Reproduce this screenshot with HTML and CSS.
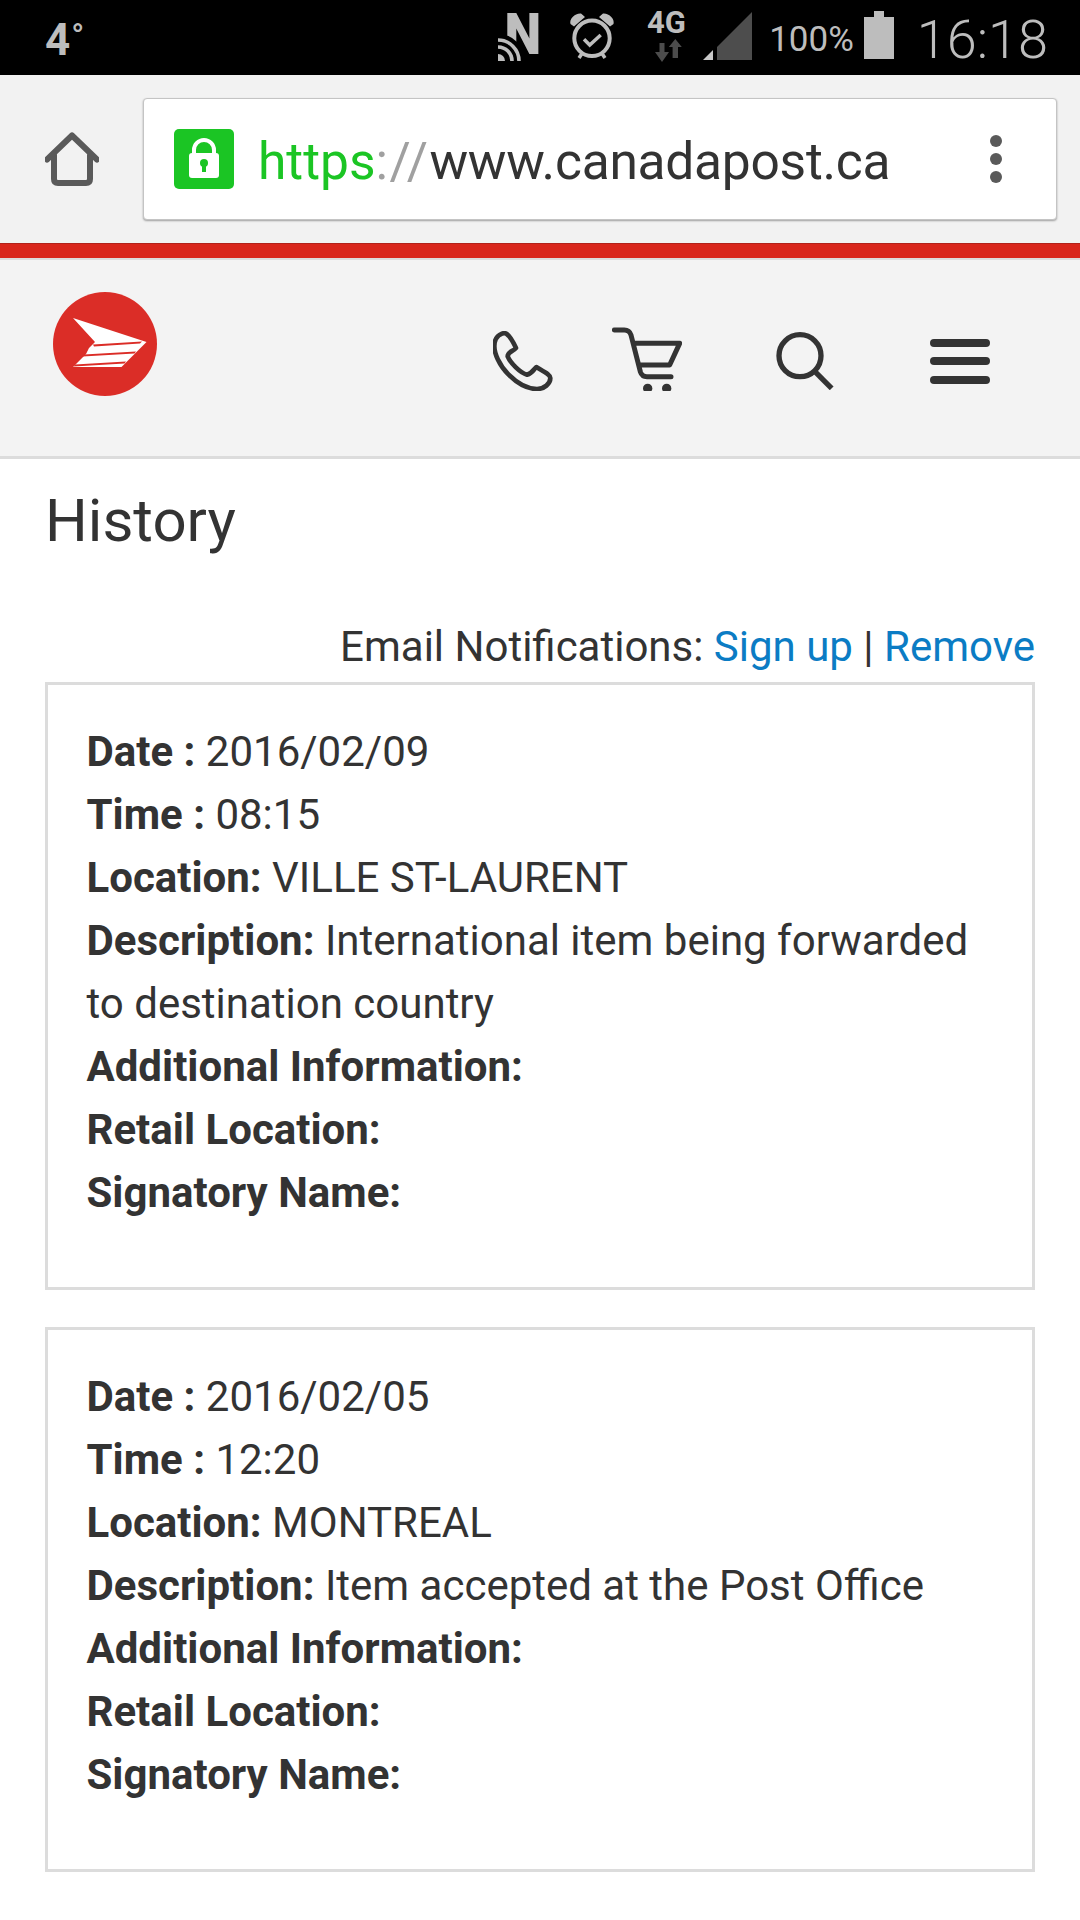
FILE: index.html
```html
<!DOCTYPE html>
<html lang="en">
<head>
<meta charset="utf-8">
<title>History - Canada Post</title>
<link rel="stylesheet" href="styles.css">
</head>
<body>
<div class="status">
  <span class="temp">4<span class="deg">°</span></span>
  <svg class="st-nfc" width="44" height="70" viewBox="0 0 44 70">
    <text class="st-n" transform="translate(6.500 54) scale(.9 1)">N</text>
    <circle cx="0" cy="61" r="27" fill="#000"/>
    <g fill="none" stroke="#bdbdbd" stroke-width="3.600">
      <path d="M0 40A21 21 0 0 1 21 61"/>
      <path d="M0 47A14 14 0 0 1 14 61"/>
    </g>
    <path d="M0 54A7 7 0 0 1 7 61H0z" fill="#bdbdbd"/>
  </svg>
  <svg class="st-alarm" width="46" height="50" viewBox="0 0 46 50">
    <circle cx="23" cy="26.300" r="17.700" fill="none" stroke="#bdbdbd" stroke-width="4"/>
    <path d="M15 27.300l5.700 5.700 11-10" fill="none" stroke="#bdbdbd" stroke-width="3.500"/>
    <path d="M1.500 12C0 7 6 1 12 1.500L16 5 5 14.500z M44.500 12C46 7 40 1 34 1.500L30 5 41 14.500z" fill="#bdbdbd"/>
    <path d="M13 41.500l-3 4.500M33 41.500l3 4.500" stroke="#bdbdbd" stroke-width="3.500"/>
  </svg>
  <svg class="st-net" width="40" height="64" viewBox="0 0 40 64">
    <text class="st-4g" x="0" y="33">4G</text>
    <path d="M12.500 43h5v9H22l-7 10-7-10h4.500z M28.300 39l6.500 8H31v11h-5.400V47h-3.800z" fill="#4c4c4c"/>
  </svg>
  <svg class="st-signal" width="49" height="48" viewBox="0 0 49 48">
    <path d="M14 48V35L49 0v48z" fill="#4d4d4d"/>
    <path d="M0 48l10-10v10z" fill="#c8c8c8"/>
  </svg>
  <span class="st-pct">100%</span>
  <svg class="st-batt" width="30" height="48" viewBox="0 0 30 48">
    <path d="M10 0h10v6h10v42H0V6h10z" fill="#bdbdbd"/>
  </svg>
  <span class="st-time">16:18</span>
</div>

<div class="chrome">
  <svg class="home" width="54" height="56" viewBox="0 0 54 56">
    <path d="M2 28.500L27 4.500l25 24M9 24v24q0 4 4 4h28q4 0 4-4V24" fill="none" stroke="#5a5a5a" stroke-width="6" stroke-linecap="round" stroke-linejoin="round"/>
  </svg>
  <div class="urlbox">
    <svg class="lock" width="60" height="60" viewBox="0 0 60 60">
      <rect width="60" height="60" rx="5" fill="#1bc524"/>
      <path d="M20 26v-5a10 10 0 0 1 20 0v5" fill="none" stroke="#fff" stroke-width="4"/>
      <rect x="15" y="24" width="30" height="25" rx="3" fill="#fff"/>
      <circle cx="30" cy="34" r="4" fill="#1bc524"/>
      <rect x="28" y="35" width="4" height="8" fill="#1bc524"/>
    </svg>
    <span class="url"><span class="u-scheme">https</span><span class="u-sep">://</span><span class="u-host">www.canadapost.ca</span></span>
    <span class="dots"><i></i><i></i><i></i></span>
  </div>
</div>
<div class="redbar"></div>

<header class="site">
  <svg class="logo" width="104" height="104" viewBox="0 0 104 104">
    <circle cx="52" cy="52" r="52" fill="#db2d27"/>
    <path d="M20 26L93.500 50 68.500 75H20L33 62l3-6 6-6z" fill="#fff"/>
    <path d="M40 52.500l49-3-2 2-46 3z M31 62.500l52-3-1.500 2-52 3z M22 72.500l51-3 -1.500 2-51 3z" fill="#db2d27"/>
  </svg>
  <nav class="tools">
    <svg class="i-phone" width="60" height="60" viewBox="68 64 180 180">
      <path d="M95 72C80 78 72 90 72 110 72 130 85 165 115 195 145 225 170 238 200 238 222 238 240 222 240 205 240 195 225 188 198 172 190 178 188 190 170 195 150 190 120 160 112 140 112 125 130 125 137 115 130 100 118 78 108 72 104 70 100 70 95 72Z" fill="none" stroke="#333" stroke-width="14" stroke-linejoin="round"/>
    </svg>
    <svg class="i-cart" width="70" height="66" viewBox="425 45 210 198">
      <path d="M432 60h30q15 0 20 15l28 110q5 15 20 15h72M490 100h138l-30 65H505" fill="none" stroke="#333" stroke-width="15" stroke-linecap="round" stroke-linejoin="round"/>
      <circle cx="532" cy="235" r="14" fill="#333"/>
      <circle cx="589" cy="235" r="14" fill="#333"/>
    </svg>
    <svg class="i-search" width="58" height="58" viewBox="48 66 174 174">
      <circle cx="120" cy="137" r="63" fill="none" stroke="#333" stroke-width="16"/>
      <path d="M165 185l50 50" stroke="#333" stroke-width="16"/>
    </svg>
    <span class="burger"><i></i><i></i><i></i></span>
  </nav>
</header>

<main class="content">
  <h1>History</h1>
  <p class="notify">Email Notifications: <a href="#">Sign up</a> | <a href="#">Remove</a></p>
  <section class="card">
    <div><b>Date :</b> 2016/02/09</div>
    <div><b>Time :</b> 08:15</div>
    <div><b>Location:</b> VILLE ST-LAURENT</div>
    <div><b>Description:</b> International item being forwarded to destination country</div>
    <div><b>Additional Information:</b></div>
    <div><b>Retail Location:</b></div>
    <div><b>Signatory Name:</b></div>
  </section>
  <section class="card">
    <div><b>Date :</b> 2016/02/05</div>
    <div><b>Time :</b> 12:20</div>
    <div><b>Location:</b> MONTREAL</div>
    <div><b>Description:</b> Item accepted at the Post Office</div>
    <div><b>Additional Information:</b></div>
    <div><b>Retail Location:</b></div>
    <div><b>Signatory Name:</b></div>
  </section>
</main>
</body>
</html>
```

FILE: styles.css
```css
* { box-sizing: border-box; }
html, body { margin: 0; padding: 0; }
body {
  width: 1080px;
  height: 1920px;
  overflow: hidden;
  background: #fff;
  color: #333;
  font-family: Roboto, "Liberation Sans", sans-serif;
}

/* status bar */
.status {
  height: 75px;
  background: #000;
  color: #bdbdbd;
  display: flex;
  align-items: flex-start;
  padding: 0 32px 0 45px;
}
.temp {
  font-size: 44px;
  font-weight: 700;
  line-height: 50px;
  margin-top: 15px;
  margin-right: auto;
  display: flex;
}
.deg { font-size: 34px; line-height: 34px; font-weight: 500; margin-top: 3px; margin-left: 1px; }
.st-nfc { margin-right: 27px; flex: none; }
.st-n { font-size: 58px; font-weight: 900; fill: #bdbdbd; font-family: Roboto, sans-serif; }
.st-alarm { margin-top: 12px; margin-right: 32px; flex: none; }
.st-net { margin-right: 16px; flex: none; }
.st-4g { font-size: 31px; font-weight: 700; fill: #bdbdbd; font-family: Roboto, sans-serif; }
.st-signal { margin-top: 12px; margin-right: 17px; flex: none; }
.st-pct { font-size: 35px; line-height: 40px; margin-top: 20px; margin-right: 10px; }
.st-batt { margin-top: 11px; margin-right: 23px; flex: none; }
.st-time { font-size: 54px; font-weight: 300; line-height: 60px; margin-top: 10px; }

/* browser chrome */
.chrome {
  height: 168px;
  background: #f2f2f2;
  display: flex;
  align-items: flex-start;
  padding: 23px 23px 0 45px;
}
.home { margin-top: 33px; margin-right: 44px; flex: none; }
.urlbox {
  width: 914px;
  height: 122px;
  background: #fff;
  border: 1px solid #c4c4c4;
  border-radius: 4px;
  box-shadow: 0 1px 2px rgba(0, 0, 0, .35);
  display: flex;
  align-items: center;
  padding-left: 30px;
}
.lock { margin-right: 24px; flex: none; }
.url { font-size: 51.5px; line-height: 60px; margin-top: 5px; color: #333; white-space: nowrap; }
.u-scheme { color: #1bc524; }
.u-sep { color: #a0a0a0; letter-spacing: 1.5px; }
.u-host { letter-spacing: -.26px; }
.dots { margin-left: auto; margin-right: 54px; display: flex; flex-direction: column; gap: 6px; }
.dots i { width: 12px; height: 12px; border-radius: 50%; background: #5a5a5a; display: block; }
.redbar {
  height: 17px;
  background: #d9261c;
  border-top: 1px solid #b1221a;
  border-bottom: 2px solid #dcdcdc;
}

/* site header */
.site {
  height: 199px;
  background: #f3f3f3;
  border-bottom: 3px solid #dcdcdc;
  display: flex;
  align-items: flex-start;
  padding: 32px 0 0 53px;
}
.logo { flex: none; }
.tools { margin-left: auto; margin-right: 90px; display: flex; align-items: flex-start; }
.i-phone { margin-top: 39px; margin-right: 59px; }
.i-cart { margin-top: 33px; margin-right: 94px; }
.i-search { margin-top: 40px; margin-right: 96px; }
.burger { margin-top: 47px; display: flex; flex-direction: column; gap: 10.4px; }
.burger i { display: block; width: 60px; height: 8px; border-radius: 4px; background: #333; }

/* content */
.content { padding: 0 45px; }
h1 {
  margin: 0;
  padding-top: 22px;
  font-size: 60px;
  font-weight: 400;
  line-height: 80px;
}
.notify {
  margin: 54px 0 4px;
  font-size: 42px;
  line-height: 63px;
  text-align: right;
}
.notify a { color: #0b7cc4; text-decoration: none; }
.card {
  border: 3px solid #dcdcdc;
  padding: 35px 38.5px 63px;
  margin-bottom: 37px;
  font-size: 42px;
  line-height: 63px;
}
.card b { font-weight: 700; }
```
